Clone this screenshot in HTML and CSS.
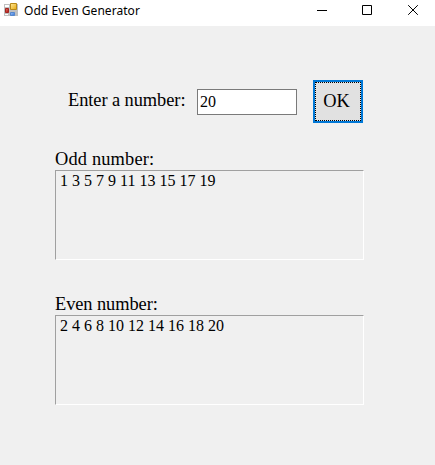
FILE: index.html
```html
<!DOCTYPE html>
<html lang="en">
<head>
<meta charset="utf-8">
<title>Odd Even Generator</title>
<link rel="stylesheet" href="styles.css">
</head>
<body>
<header class="titlebar">
  <svg class="app-icon" width="16" height="16" viewBox="0 0 16 16">
    <defs>
      <linearGradient id="gold" x1="0" y1="0" x2="1" y2="1"><stop offset="0" stop-color="#ffe99a"/><stop offset="1" stop-color="#e8a90c"/></linearGradient>
      <linearGradient id="red" x1="0" y1="0" x2="1" y2="1"><stop offset="0" stop-color="#e87867"/><stop offset="1" stop-color="#a90c0c"/></linearGradient>
      <linearGradient id="blue" x1="0" y1="0" x2="1" y2="1"><stop offset="0" stop-color="#9cc5ff"/><stop offset="1" stop-color="#3470d0"/></linearGradient>
    </defs>
    <path fill="#c0c0c0" d="M0 1h14v12H0z"/>
    <path fill="#fff" d="M1 2h4v2H1zM1 11h3v1H1z"/>
    <path fill="url(#gold)" stroke="#b98a18" d="M6.500.5h6v6h-6z"/>
    <path fill="url(#red)" stroke="#a32420" d="M1.500 5.500h3v4h-3z"/>
    <path fill="url(#blue)" stroke="#5587cc" d="M6.500 9.500h4v3h-4z"/>
  </svg>
  <h1 class="title">Odd Even Generator</h1>
  <div class="controls">
    <svg width="10" height="11" viewBox="0 0 10 11"><path d="M0 5.500h10"/></svg>
    <svg width="10" height="11" viewBox="0 0 10 11"><path d="M.5.5h9v9h-9z"/></svg>
    <svg class="close" width="10" height="11" viewBox="0 0 10 11"><path d="M.2.2l9.600 9.600M9.800.2l-9.600 9.600"/></svg>
  </div>
</header>
<main class="form">
  <div class="entry">
    <label class="label" for="number">Enter a number:</label>
    <input class="number" id="number" type="text" value="20">
    <button class="ok" type="button"><span class="focus">OK</span></button>
  </div>
  <section class="group">
    <h2 class="label odd">Odd number:</h2>
    <div class="result">1 3 5 7 9 11 13 15 17 19</div>
  </section>
  <section class="group">
    <h2 class="label even">Even number:</h2>
    <div class="result">2 4 6 8 10 12 14 16 18 20</div>
  </section>
</main>
</body>
</html>
```
FILE: styles.css
```css
* { box-sizing: border-box; }
body {
  margin: 0;
  height: 465px;
  overflow: hidden;
  background: #f0f0f0;
  color: #000;
  font-family: "Liberation Serif", "Times New Roman", serif;
}
.titlebar {
  display: flex;
  height: 26px;
  padding: 3px 16px 0 4px;
  background: #fff;
}
.title {
  margin: 0 0 0 4px;
  font: 400 12px/16px "Noto Sans", sans-serif;
  letter-spacing: 0.05px;
}
.controls {
  display: flex;
  gap: 35px;
  margin: 2px 0 0 auto;
}
.controls svg { fill: none; stroke: #000; }
.controls .close { margin-left: 1px; margin-right: 1px; }
.form { padding: 54px 71px 0 55px; }
.entry {
  display: flex;
  height: 43px;
  padding-left: 13px;
}
.label {
  margin: 0;
  font-size: 18.4px;
  font-weight: 400;
  line-height: 22px;
}
.entry .label {
  width: 129px;
  padding-top: 9px;
  letter-spacing: -0.07px;
  white-space: nowrap;
}
.odd { letter-spacing: 0.16px; }
.even { letter-spacing: -0.08px; }
.number {
  width: 100px;
  height: 26px;
  margin: 9px 16px 0 0;
  padding: 0 2px;
  border: 1px solid #7a7a7a;
  border-radius: 0;
  background: #fff;
  color: #000;
  font: 16px "Liberation Serif", serif;
  outline: 0;
}
.ok {
  width: 50px;
  height: 43px;
  padding: 0;
  border: 2px solid #0078d7;
  border-radius: 0;
  background: #e1e1e1;
  color: #000;
  font: 18.4px "Liberation Serif", serif;
}
.focus {
  display: flex;
  align-items: center;
  justify-content: center;
  height: 39px;
  padding-right: 3px;
  border: 1px dotted #000;
}
.group { margin-top: 33px; }
.entry + .group { margin-top: 25px; }
.result {
  height: 90px;
  padding: 1px 4px;
  border: 1px solid;
  border-color: #a0a0a0 #fff #fff #a0a0a0;
  font-size: 16px;
  line-height: 18px;
}
```
